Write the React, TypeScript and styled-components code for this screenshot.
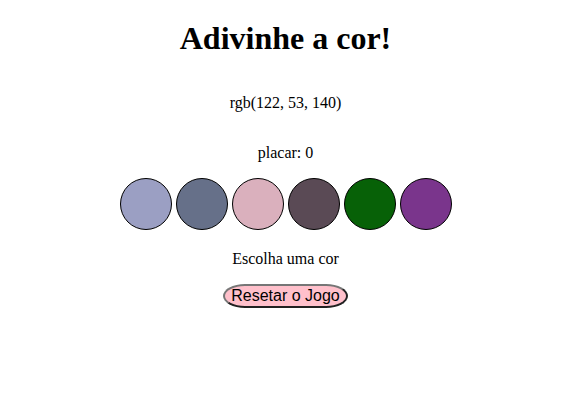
import React, { useState } from 'react';
import styled, { createGlobalStyle } from 'styled-components';

const GlobalStyle = createGlobalStyle`
  body {
    margin: 8px;
    font-family: "Liberation Serif", "Times New Roman", serif;
    background: #fff;
    color: #000;
  }
`;

const Game = styled.div`
  text-align: center;
  padding-right: 15px;
`;

const Title = styled.h1`
  font-size: 32px;
  font-weight: bold;
  margin: 11.5px 0 21.44px;
`;

const Line = styled.p<{ $top: number }>`
  font-size: 16px;
  margin: ${(p) => p.$top}px 0 16px;
`;

const Palette = styled.div`
  display: flex;
  justify-content: center;
  gap: 4px;
  margin-top: 14px;
`;

const Swatch = styled.button<{ $color: string }>`
  width: 52px;
  height: 52px;
  padding: 0;
  border-radius: 50%;
  border: 1px solid #000;
  background: ${(p) => p.$color};
  cursor: pointer;
`;

const ResetButton = styled.button`
  font-family: "Liberation Sans", Arial, sans-serif;
  font-size: 16px;
  padding: 1px 6px;
  background: pink;
  border: 2px outset #767676;
  border-radius: 22px / 12px;
  color: #000;
  cursor: pointer;
`;

const colors = ['#9b9fc3', '#667089', '#dab0bd', '#5a4a55', '#076107', '#7a358c'];

export default function App() {
  const [score] = useState(0);

  return (
    <>
      <GlobalStyle />
      <Game>
        <Title>Adivinhe a cor!</Title>
        <Line $top={37}>rgb(122, 53, 140)</Line>
        <Line $top={32}>placar: {score}</Line>
        <Palette>
          {colors.map((c) => (
            <Swatch key={c} $color={c} aria-label={c} />
          ))}
        </Palette>
        <Line $top={20}>Escolha uma cor</Line>
        <ResetButton>Resetar o Jogo</ResetButton>
      </Game>
    </>
  );
}
